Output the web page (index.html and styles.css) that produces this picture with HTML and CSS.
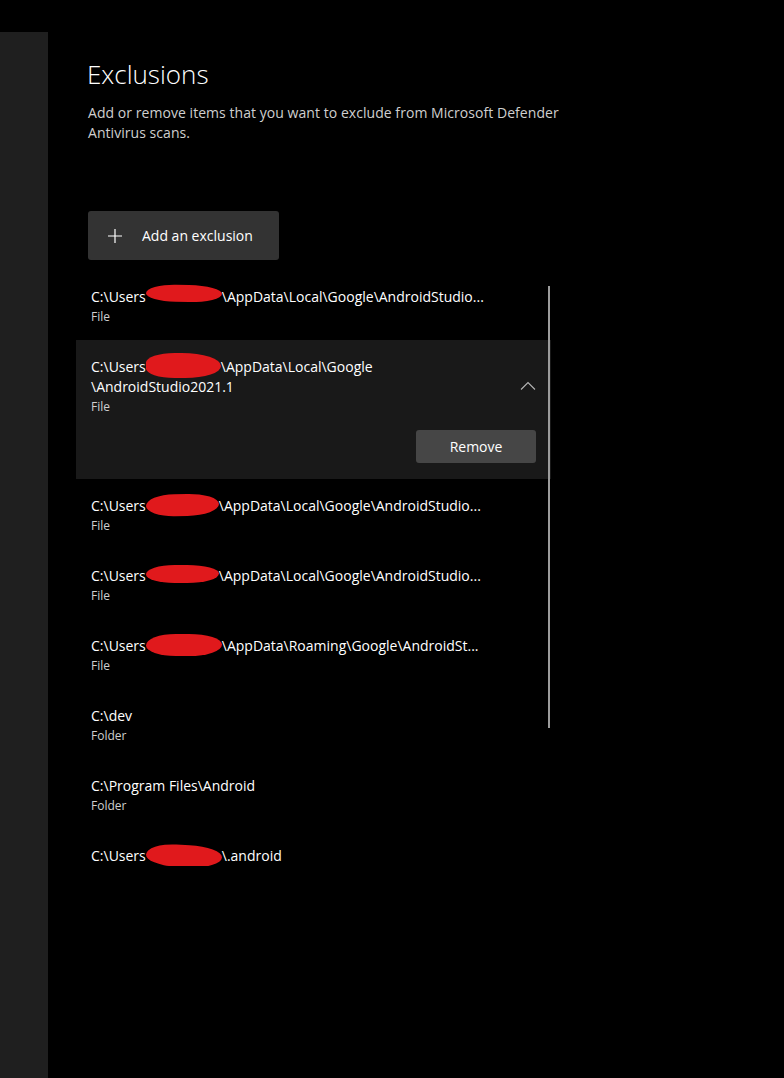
FILE: index.html
```html
<!DOCTYPE html>
<html lang="en">
<head>
<meta charset="utf-8">
<title>Exclusions</title>
<link rel="stylesheet" href="styles.css">
</head>
<body>
<div class="page">
  <aside class="sidebar"></aside>
  <main class="main">
    <h1 class="title">Exclusions</h1>
    <p class="desc">Add or remove items that you want to exclude from Microsoft Defender<br>Antivirus scans.</p>
    <button class="add-btn">
      <svg class="plus" width="16" height="16" viewBox="0 0 16 16"><path d="M8 1v14M1 8h14" stroke="#fff" stroke-width="1.2" fill="none"/></svg>
      <span>Add an exclusion</span>
    </button>
    <div class="list">
      <div class="item">
        <div class="path">C:\Users<span class="redact r1"></span>\AppData\Local\Google\AndroidStudio...</div>
        <div class="kind">File</div>
      </div>
      <div class="item expanded">
        <div class="exp-head">
          <div class="exp-text">
            <div class="path">C:\Users<span class="redact r2"></span>\AppData\Local\Google<br>\AndroidStudio2021.1</div>
            <div class="kind">File</div>
          </div>
          <svg class="chev" width="16" height="10" viewBox="0 0 16 10"><path d="M1 8.5L8 1.5l7 7" stroke="#b5b5b5" stroke-width="1.1" fill="none"/></svg>
        </div>
        <div class="exp-actions"><button class="remove-btn">Remove</button></div>
      </div>
      <div class="item">
        <div class="path">C:\Users<span class="redact r3"></span>\AppData\Local\Google\AndroidStudio...</div>
        <div class="kind">File</div>
      </div>
      <div class="item">
        <div class="path">C:\Users<span class="redact r4"></span>\AppData\Local\Google\AndroidStudio...</div>
        <div class="kind">File</div>
      </div>
      <div class="item">
        <div class="path">C:\Users<span class="redact r5"></span>\AppData\Roaming\Google\AndroidSt...</div>
        <div class="kind">File</div>
      </div>
      <div class="item">
        <div class="path">C:\dev</div>
        <div class="kind">Folder</div>
      </div>
      <div class="item">
        <div class="path">C:\Program Files\Android</div>
        <div class="kind">Folder</div>
      </div>
      <div class="item">
        <div class="path">C:\Users<span class="redact r6"></span>\.android</div>
      </div>
      <div class="scrollbar"></div>
    </div>
  </main>
</div>
</body>
</html>
```

FILE: styles.css
```css
* { box-sizing: border-box; }
html, body {
  margin: 0;
  padding: 0;
  background: #000;
  color: #fff;
  font-family: "Open Sans", "Noto Sans", "Liberation Sans", sans-serif;
}
.page {
  display: flex;
  min-height: 1078px;
}
.sidebar {
  width: 48px;
  flex: 0 0 48px;
  margin-top: 32px;
  background: #1f1f1f;
}
.main {
  flex: 1;
  padding: 56px 0 0 40px;
}
.title {
  margin: 0 0 0 -1px;
  font-size: 26px;
  font-weight: 300;
  line-height: 36px;
}
.desc {
  margin: 11px 0 0;
  font-size: 14px;
  line-height: 20px;
  color: #cfcfcf;
  letter-spacing: 0.05px;
}
.add-btn {
  margin-top: 68px;
  width: 191px;
  height: 49px;
  display: flex;
  align-items: center;
  gap: 19px;
  padding: 0 0 0 19px;
  border: none;
  border-radius: 3px;
  background: #333;
  color: #fff;
  font-family: inherit;
  font-size: 14px;
}
.plus { flex: none; }
.list {
  position: relative;
  margin: 10px 0 0 -12px;
  width: 475px;
  height: 596px;
  overflow: hidden;
}
.item {
  padding: 17px 15px 0;
  height: 70px;
}
.path {
  font-size: 14px;
  line-height: 20px;
  white-space: nowrap;
}
.kind {
  margin-top: 1px;
  font-size: 12px;
  line-height: 18px;
  color: #cfcfcf;
}
.redact {
  display: inline-block;
  position: relative;
  height: 14px;
  vertical-align: -2px;
}
.redact::before {
  content: "";
  position: absolute;
  left: 0;
  right: 0;
  top: -2px;
  bottom: 0;
  background: #e0191c;
  border-radius: 45% 50% 50% 45% / 60% 55% 60% 55%;
}
.r1 { width: 76px; }
.r1::before { top: -5px; bottom: 2px; transform: rotate(1deg); }
.r2 { width: 75px; }
.r2::before { top: -7px; bottom: -4px; border-radius: 40% 55% 50% 40%; }
.r3 { width: 73px; }
.r3::before { top: -5px; bottom: -3px; transform: rotate(-1deg); }
.r4 { width: 73px; }
.r4::before { top: -4px; bottom: 0; }
.r5 { width: 76px; }
.r5::before { top: -5px; bottom: -3px; }
.r6 { width: 76px; }
.r6::before { top: -4px; bottom: -4px; transform: rotate(3deg); }
.item.expanded {
  height: auto;
  background: #191919;
  padding-bottom: 16px;
}
.exp-head {
  display: flex;
  align-items: center;
  justify-content: space-between;
}
.chev {
  margin-top: -2px;
}
.exp-actions {
  display: flex;
  justify-content: flex-end;
  margin-top: 14px;
}
.remove-btn {
  width: 120px;
  height: 33px;
  border: none;
  border-radius: 3px;
  background: #464646;
  color: #fff;
  font-family: inherit;
  font-size: 14px;
}
.scrollbar {
  position: absolute;
  left: 472px;
  top: 16px;
  width: 2px;
  height: 442px;
  background: #9c9c9c;
}
```
